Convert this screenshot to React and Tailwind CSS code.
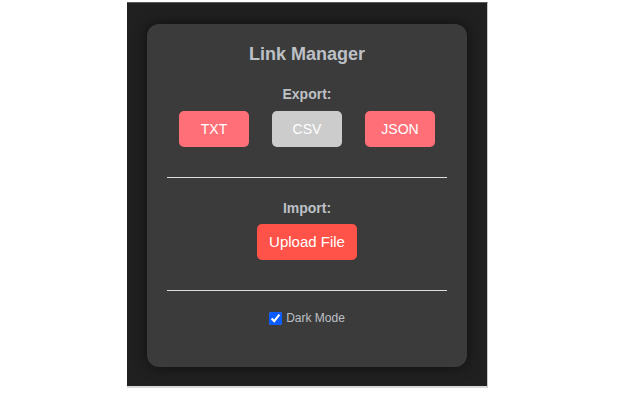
export default function App() {
    return (
        <div className="min-h-[400px] w-[640px] bg-white pl-[127px] pt-[2px] font-['Liberation_Sans',Arial,sans-serif]">
            <div className="w-[361px] border-t border-r border-b-2 border-t-[#5a5a5a] border-r-[#c8c8c8] border-b-[#d8d8d8] bg-[#202020] px-[20px] pt-[21px] pb-[19px]">
                <div className="flex flex-col items-center rounded-[12px] bg-[#3b3b3b] px-[20px] pt-[20px] pb-[42px] shadow-[0_0_14px_rgba(0,0,0,0.55)]">
                    <h2 className="text-[18px] leading-[21px] font-bold text-[#bdc1c6]">
                        Link Manager
                    </h2>
                    <h3 className="mt-[21px] text-[14px] leading-[16px] font-bold text-[#bdc1c6]">
                        Export:
                    </h3>
                    <div className="mt-[9px] flex gap-[23px]">
                        <button
                            type="button"
                            className="h-[36px] w-[70px] rounded-[5px] bg-[#ff6f77] text-[14px] text-white"
                        >
                            TXT
                        </button>
                        <button
                            type="button"
                            className="h-[36px] w-[70px] rounded-[5px] bg-[#cccccc] text-[14px] text-white"
                        >
                            CSV
                        </button>
                        <button
                            type="button"
                            className="h-[36px] w-[70px] rounded-[5px] bg-[#ff6f77] text-[14px] text-white"
                        >
                            JSON
                        </button>
                    </div>
                    <hr className="mt-[30px] w-full border-t border-[#dcdcdc]" />
                    <h3 className="mt-[22px] text-[14px] leading-[16px] font-bold text-[#bdc1c6]">
                        Import:
                    </h3>
                    <button
                        type="button"
                        className="mt-[8px] h-[36px] w-[100px] rounded-[5px] bg-[#ff5349] text-[15px] text-white"
                    >
                        Upload File
                    </button>
                    <hr className="mt-[30px] w-full border-t border-[#dcdcdc]" />
                    <label className="mt-[20px] flex items-center gap-[4px] text-[12px] leading-[14px] text-[#bdc1c6]">
                        <input type="checkbox" defaultChecked className="m-0 h-[13px] w-[13px] accent-[#0b5cff]" />
                        Dark Mode
                    </label>
                </div>
            </div>
        </div>
    );
}
